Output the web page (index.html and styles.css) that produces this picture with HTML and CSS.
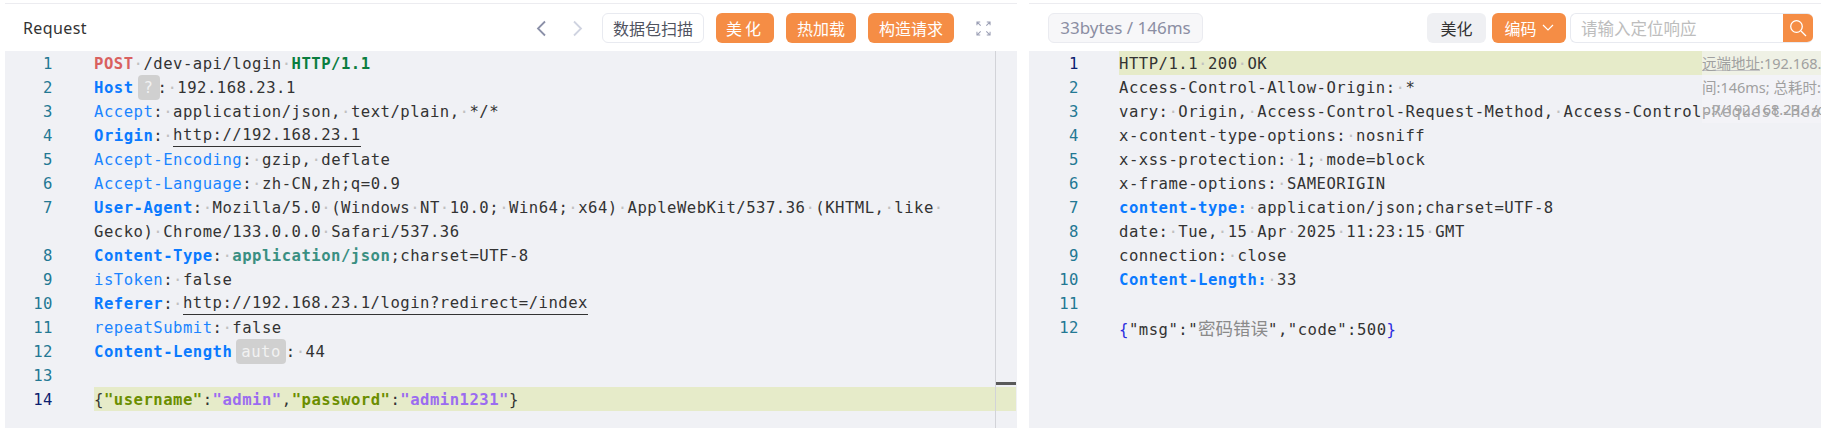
FILE: index.html
```html
<!DOCTYPE html>
<html lang="zh-CN">
<head>
<meta charset="utf-8">
<title>Request / Response</title>
<link rel="stylesheet" href="styles.css">
</head>
<body>
<div class="page">
  <section class="panel panel-req">
    <header class="head">
      <h2 class="title">Request</h2>
      <div class="nav">
        <svg class="chev" viewBox="0 0 10 16"><path d="M9 1 2 8l7 7" fill="none" stroke="#8b90a8" stroke-width="1.8"/></svg>
        <svg class="chev" viewBox="0 0 10 16"><path d="M1 1l7 7-7 7" fill="none" stroke="#cfd3e0" stroke-width="1.8"/></svg>
      </div>
      <button class="btn btn-plain">数据包扫描</button>
      <button class="btn btn-orange btn-spaced">美化</button>
      <button class="btn btn-orange">热加载</button>
      <button class="btn btn-orange">构造请求</button>
      <svg class="expand" viewBox="0 0 16 16"><g fill="none" stroke="#9a9eb4" stroke-width="1.1"><path d="M1 4.5V1h3.5M1 1l4 4M11.5 1H15v3.5M15 1l-4 4M1 11.5V15h3.5M1 15l4-4M15 11.5V15h-3.5M15 15l-4-4"/></g></svg>
    </header>
    <div class="editor editor-req">
      <div class="row"><span class="num">1</span><span class="code"><b class="red">POST</b><i>·</i>/dev-api/login<i>·</i><b class="green">HTTP/1.1</b></span></div>
      <div class="row"><span class="num">2</span><span class="code"><b class="key">Host</b><span class="chip chip-q">?</span>:<i>·</i>192.168.23.1</span></div>
      <div class="row"><span class="num">3</span><span class="code"><span class="key-l">Accept</span>:<i>·</i>application/json,<i>·</i>text/plain,<i>·</i>*/*</span></div>
      <div class="row"><span class="num">4</span><span class="code"><b class="key">Origin</b>:<i>·</i><span class="link">http://192.168.23.1</span></span></div>
      <div class="row"><span class="num">5</span><span class="code"><span class="key-l">Accept-Encoding</span>:<i>·</i>gzip,<i>·</i>deflate</span></div>
      <div class="row"><span class="num">6</span><span class="code"><span class="key-l">Accept-Language</span>:<i>·</i>zh-CN,zh;q=0.9</span></div>
      <div class="row"><span class="num">7</span><span class="code"><b class="key">User-Agent</b>:<i>·</i>Mozilla/5.0<i>·</i>(Windows<i>·</i>NT<i>·</i>10.0;<i>·</i>Win64;<i>·</i>x64)<i>·</i>AppleWebKit/537.36<i>·</i>(KHTML,<i>·</i>like<i>·</i></span></div>
      <div class="row"><span class="num"></span><span class="code">Gecko)<i>·</i>Chrome/133.0.0.0<i>·</i>Safari/537.36</span></div>
      <div class="row"><span class="num">8</span><span class="code"><b class="key">Content-Type</b>:<i>·</i><b class="teal">application/json</b>;charset=UTF-8</span></div>
      <div class="row"><span class="num">9</span><span class="code"><span class="key-l">isToken</span>:<i>·</i>false</span></div>
      <div class="row"><span class="num">10</span><span class="code"><b class="key">Referer</b>:<i>·</i><span class="link">http://192.168.23.1/login?redirect=/index</span></span></div>
      <div class="row"><span class="num">11</span><span class="code"><span class="key-l">repeatSubmit</span>:<i>·</i>false</span></div>
      <div class="row"><span class="num">12</span><span class="code"><b class="key">Content-Length</b><span class="chip">auto</span>:<i>·</i>44</span></div>
      <div class="row"><span class="num">13</span><span class="code"></span></div>
      <div class="row row-active"><span class="num">14</span><span class="code">{<b class="olive">"username"</b>:<b class="purple">"admin"</b>,<b class="olive">"password"</b>:<b class="purple">"admin1231"</b>}</span></div>
      <div class="scroll-line"></div>
      <div class="scroll-mark"></div>
    </div>
  </section>

  <section class="panel panel-res">
    <header class="head">
      <span class="stat">33bytes / 146ms</span>
      <button class="btn btn-grey">美化</button>
      <button class="btn btn-orange btn-enc">编码<svg class="caret" viewBox="0 0 12 8"><path d="M1 1l5 5 5-5" fill="none" stroke="#fff" stroke-width="1.2"/></svg></button>
      <div class="search">
        <span class="placeholder">请输入定位响应</span>
        <span class="search-btn"><svg class="glass" viewBox="0 0 18 18"><circle cx="7.5" cy="7.5" r="5.8" fill="none" stroke="#fff" stroke-width="1.3"/><path d="M12 12l5 5" stroke="#fff" stroke-width="1.3"/></svg></span>
      </div>
    </header>
    <div class="editor editor-res">
      <div class="row row-active"><span class="num">1</span><span class="code">HTTP/1.1<i>·</i>200<i>·</i>OK</span></div>
      <div class="row"><span class="num">2</span><span class="code">Access-Control-Allow-Origin:<i>·</i>*</span></div>
      <div class="row"><span class="num">3</span><span class="code">vary:<i>·</i>Origin,<i>·</i>Access-Control-Request-Method,<i>·</i>Access-Control-Request-Headers</span></div>
      <div class="row"><span class="num">4</span><span class="code">x-content-type-options:<i>·</i>nosniff</span></div>
      <div class="row"><span class="num">5</span><span class="code">x-xss-protection:<i>·</i>1;<i>·</i>mode=block</span></div>
      <div class="row"><span class="num">6</span><span class="code">x-frame-options:<i>·</i>SAMEORIGIN</span></div>
      <div class="row"><span class="num">7</span><span class="code"><b class="key">content-type:</b><i>·</i>application/json;charset=UTF-8</span></div>
      <div class="row"><span class="num">8</span><span class="code">date:<i>·</i>Tue,<i>·</i>15<i>·</i>Apr<i>·</i>2025<i>·</i>11:23:15<i>·</i>GMT</span></div>
      <div class="row"><span class="num">9</span><span class="code">connection:<i>·</i>close</span></div>
      <div class="row"><span class="num">10</span><span class="code"><b class="key">Content-Length:</b><i>·</i>33</span></div>
      <div class="row"><span class="num">11</span><span class="code"></span></div>
      <div class="row"><span class="num">12</span><span class="code"><span class="brace">{</span>"msg":"<span class="cjk">密码错误</span>","code":500<span class="brace">}</span></span></div>
      <div class="info">
        <div class="info-line"><span class="info-u">远端地址</span>:192.168.23.1; 响应时</div>
        <div class="info-line">间:146ms; 总耗时:146ms; URL:htt</div>
        <div class="info-line info-last">p://192.168.23.1/dev-api/login</div>
      </div>
    </div>
  </section>
</div>
</body>
</html>
```
FILE: styles.css
```css
* { box-sizing: border-box; }
html, body { margin: 0; padding: 0; background: #fff; }
body { width: 1821px; height: 428px; overflow: hidden; font-family: "Noto Sans", "Noto Sans CJK SC", sans-serif; }
.page { display: flex; gap: 12px; height: 428px; padding: 3px 0 0 5px; }
.panel { display: flex; flex-direction: column; min-width: 0; border-top: 1px solid #ececf0; }
.panel-req { width: 1012px; }
.panel-res { flex: 1; }
.head { display: flex; align-items: center; height: 47px; flex: none; background: #fff; padding-top: 1px; }
.panel-req .head { padding-left: 18px; }
.panel-res .head { padding-left: 19px; }
.title { margin: 0; font-size: 16px; font-weight: 400; color: #333; letter-spacing: .4px; flex: 1; }
.nav { display: flex; gap: 27px; margin-right: 19px; }
.chev { width: 10px; height: 17px; display: block; }
.btn { height: 30px; padding: 0; border: 0; border-radius: 6px; font-family: "Noto Sans CJK SC", sans-serif; font-size: 16px; line-height: 30px; }
.btn-plain { width: 102px; background: #fff; border: 1px solid #e8eaf0; color: #50535f; line-height: 28px; }
.btn-orange { background: #f58d45; color: #fff; margin-left: 12px; }
.btn-spaced { width: 58px; letter-spacing: 3px; }
.btn-orange:nth-of-type(3) { width: 70px; }
.btn-orange:nth-of-type(4) { width: 86px; }
.expand { width: 15px; height: 15px; margin: 0 26px 0 22px; flex: none; }
.stat { width: 155px; height: 30px; border: 1px solid #eaebf0; border-radius: 6px; background: #f7f7f9; color: #8b8ea3; font-size: 17px; line-height: 28px; text-align: center; margin-right: auto; }
.btn-grey { width: 59px; background: #eff0f3; color: #333; }
.btn-enc { width: 74px; margin-left: 6px; display: flex; align-items: center; justify-content: center; gap: 5px; }
.caret { width: 12px; height: 8px; }
.search { display: flex; width: 243px; height: 30px; margin: 0 8px 0 4px; border: 1px solid #e8eaf0; border-right: 0; border-radius: 6px; overflow: hidden; background: #fff; }
.placeholder { flex: 1; padding-left: 10px; font-family: "Noto Sans CJK SC", sans-serif; font-size: 16.5px; line-height: 28px; color: #bdbdbd; }
.search-btn { width: 30px; margin: -1px 0; background: #f58d45; display: flex; align-items: center; justify-content: center; }
.glass { width: 18px; height: 18px; }
.editor { position: relative; flex: 1; background: #f0f1f5; overflow: hidden; font-family: "DejaVu Sans Mono", monospace; font-size: 15.6px; letter-spacing: .49px; color: #333; }
.row { display: flex; height: 24px; line-height: 26px; white-space: pre; }
.num { flex: none; text-align: right; color: #237893; }
.editor-req .num { width: 48px; margin-right: 41px; }
.editor-res .num { width: 50px; margin-right: 40px; }
.code { flex: 1; min-width: 0; }
.row-active .num { color: #0b216f; }
.row-active .code { background: #e6ebc9; }
.editor-req .row-active .code { margin-right: 1px; }
.code i { font-style: normal; color: #c0c0c0; }
.code b { font-weight: 700; }
.red { color: #d9605f; }
.green { color: #0b7d3f; }
.key { color: #0a7aff; }
.key-l { color: #1a84ff; }
.teal { color: #3a8f82; }
.olive { color: #6b8e00; }
.purple { color: #9b6cf0; }
.brace { color: #2a2ae0; }
.cjk { font-family: "Noto Sans CJK SC", sans-serif; color: #8a8a8a; font-size: 17.5px; letter-spacing: 0; }
.link { display: inline-block; height: 24px; line-height: 25px; border-bottom: 1px solid #333; vertical-align: top; }
.chip { display: inline-block; height: 25px; line-height: 26px; margin: 0 0 0 4px; padding: 0 5px; border-radius: 4px; background: #d0d0d0; color: #f2f2f2; vertical-align: top; }
.chip-q { width: 22px; padding: 0; text-align: center; margin-right: -2px; }
.scroll-line { position: absolute; left: 990px; top: 0; bottom: 0; width: 1px; background: #d2d3d8; }
.scroll-mark { position: absolute; left: 991px; right: 1px; top: 331px; height: 3px; background: #5a5a5a; }
.info { position: absolute; left: 673px; top: 0; right: 0; height: 72px; overflow: hidden; background: rgba(245,245,248,.6); font-family: "Noto Sans", "Noto Sans CJK SC", sans-serif; font-size: 14.5px; letter-spacing: 0; color: #a0a0a0; }
.info-line { height: 24px; line-height: 24px; white-space: nowrap; }
.info-u { text-decoration: underline; text-decoration-color: #c4c4c4; }
.info-last { line-height: 20px; }
```
